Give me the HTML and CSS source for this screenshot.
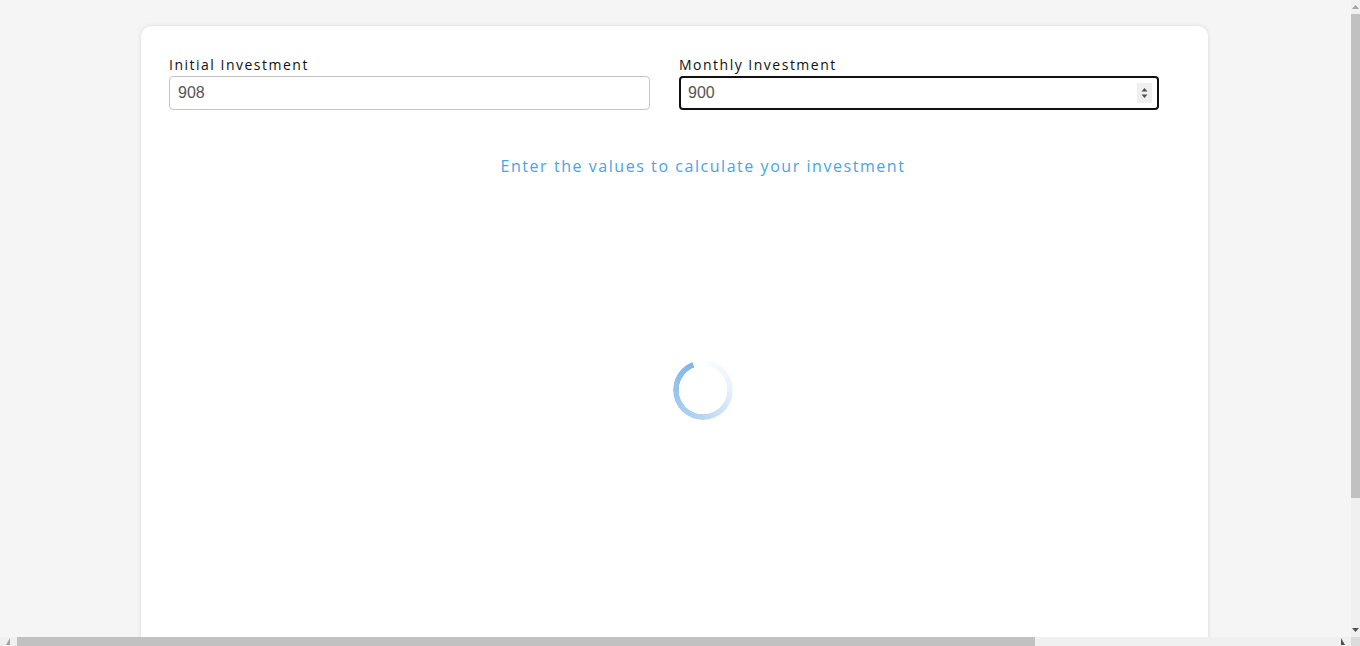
FILE: index.html
```html
<!DOCTYPE html>
<html lang="en">
<head>
<meta charset="utf-8">
<title>Investment Calculator</title>
<link rel="stylesheet" href="styles.css">
</head>
<body>
<div class="page">
  <main class="card">
    <div class="fields">
      <div class="field">
        <label class="label" for="initial">Initial Investment</label>
        <input class="input" id="initial" type="text" value="908">
      </div>
      <div class="field">
        <label class="label" for="monthly">Monthly Investment</label>
        <div class="input-wrap">
          <input class="input input-focused" id="monthly" type="text" value="900">
          <span class="spin" aria-hidden="true">
            <svg width="7" height="12" viewBox="0 0 7 12"><path d="M0.5 4.5 L3.5 1 L6.5 4.5Z M0.5 7.5 L3.5 11 L6.5 7.5Z" fill="#505050"/></svg>
          </span>
        </div>
      </div>
    </div>
    <div class="result">
      <p class="message">Enter the values to calculate your investment</p>
      <div class="loader"><div class="spinner"></div></div>
    </div>
  </main>
</div>
<div class="vscroll" aria-hidden="true">
  <span class="sb-btn sb-up"><svg width="7" height="4" viewBox="0 0 7 4"><path d="M0 4 L3.5 0 L7 4Z" fill="#a3a3a3"/></svg></span>
  <span class="sb-track"><span class="sb-thumb-v"></span></span>
  <span class="sb-btn sb-down"><svg width="7" height="4" viewBox="0 0 7 4"><path d="M0 0 L3.5 4 L7 0Z" fill="#505050"/></svg></span>
</div>
<div class="hscroll" aria-hidden="true">
  <span class="sb-hbtn"><svg width="4" height="7" viewBox="0 0 4 7"><path d="M4 0 L0 7 L4 7Z" fill="#a3a3a3"/></svg></span>
  <span class="sb-htrack"><span class="sb-thumb-h"></span></span>
  <span class="sb-hbtn"><svg width="4" height="7" viewBox="0 0 4 7"><path d="M0 0 L4 7 L0 7Z" fill="#505050"/></svg></span>
</div>
<div class="scorner" aria-hidden="true"></div>
</body>
</html>
```

FILE: styles.css
```css
html, body {
  margin: 0;
  padding: 0;
  background: #f5f5f5;
  overflow: hidden;
  height: 100%;
}

.page {
  padding-top: 26px;
}

.card {
  margin-left: 141px;
  width: 1067px;
  height: 774px;
  box-sizing: border-box;
  background: #ffffff;
  border-radius: 10px;
  box-shadow: 0 0 4px rgba(0, 0, 0, 0.12);
  padding: 28px 0 0 28px;
}

.fields {
  display: grid;
  grid-template-columns: 481px 480px;
  column-gap: 29px;
}

.field {
  display: flex;
  flex-direction: column;
}

.label {
  font-family: "Open Sans", "Lato", sans-serif;
  font-size: 14px;
  line-height: 22px;
  letter-spacing: 1.5px;
  color: #111;
}

.input-wrap {
  position: relative;
  display: flex;
}

.input {
  width: 100%;
  height: 34px;
  box-sizing: border-box;
  border: 1px solid #c4c4c4;
  border-radius: 4px;
  padding: 0 8px;
  font-family: "Liberation Sans", Arial, sans-serif;
  font-size: 16px;
  color: #555;
  background: #fff;
  outline: none;
  margin: 0;
}

.input-focused {
  border: 2px solid #111;
  padding: 0 30px 0 7px;
}

.spin {
  position: absolute;
  right: 7px;
  top: 7px;
  width: 15px;
  height: 20px;
  background: #efefef;
  display: flex;
  align-items: center;
  justify-content: center;
}

.result {
  width: 1068px;
  display: flex;
  flex-direction: column;
  align-items: center;
}

.message {
  margin: 45px 0 0;
  font-family: "Open Sans", "Lato", sans-serif;
  font-size: 16px;
  line-height: 22px;
  letter-spacing: 1.55px;
  color: #4aa3e8;
}

.loader {
  padding-top: 183px;
  display: flex;
  justify-content: center;
}

.spinner {
  width: 60px;
  height: 60px;
  border-radius: 50%;
  background: conic-gradient(from -12deg, rgba(120, 178, 230, 0) 0deg, rgba(120, 178, 230, 0.15) 90deg, rgba(120, 178, 230, 0.55) 200deg, rgba(120, 178, 230, 0.95) 350deg, rgba(120, 178, 230, 0) 352deg);
  -webkit-mask: radial-gradient(circle, transparent 24px, #000 24.5px);
  mask: radial-gradient(circle, transparent 24px, #000 24.5px);
}

/* painted browser scrollbars */
.vscroll {
  position: fixed;
  top: 0;
  right: 0;
  width: 9px;
  height: 637px;
  background: #f0f0f0;
  display: flex;
  flex-direction: column;
}

.sb-btn {
  height: 14px;
  flex: none;
  display: flex;
  align-items: center;
  justify-content: center;
}

.sb-track {
  flex: 1;
  display: flex;
  flex-direction: column;
}

.sb-thumb-v {
  height: 484px;
  background: #c1c1c1;
}

.hscroll {
  position: fixed;
  left: 0;
  bottom: 0;
  width: 1351px;
  height: 9px;
  background: #f0f0f0;
  display: flex;
}

.sb-hbtn {
  width: 16px;
  flex: none;
  display: flex;
  align-items: center;
  justify-content: center;
}

.sb-htrack {
  flex: 1;
  display: flex;
  padding-left: 1px;
}

.sb-thumb-h {
  width: 1018px;
  background: #c1c1c1;
}

.scorner {
  position: fixed;
  right: 0;
  bottom: 0;
  width: 9px;
  height: 9px;
  background: #dcdcdc;
}
```
